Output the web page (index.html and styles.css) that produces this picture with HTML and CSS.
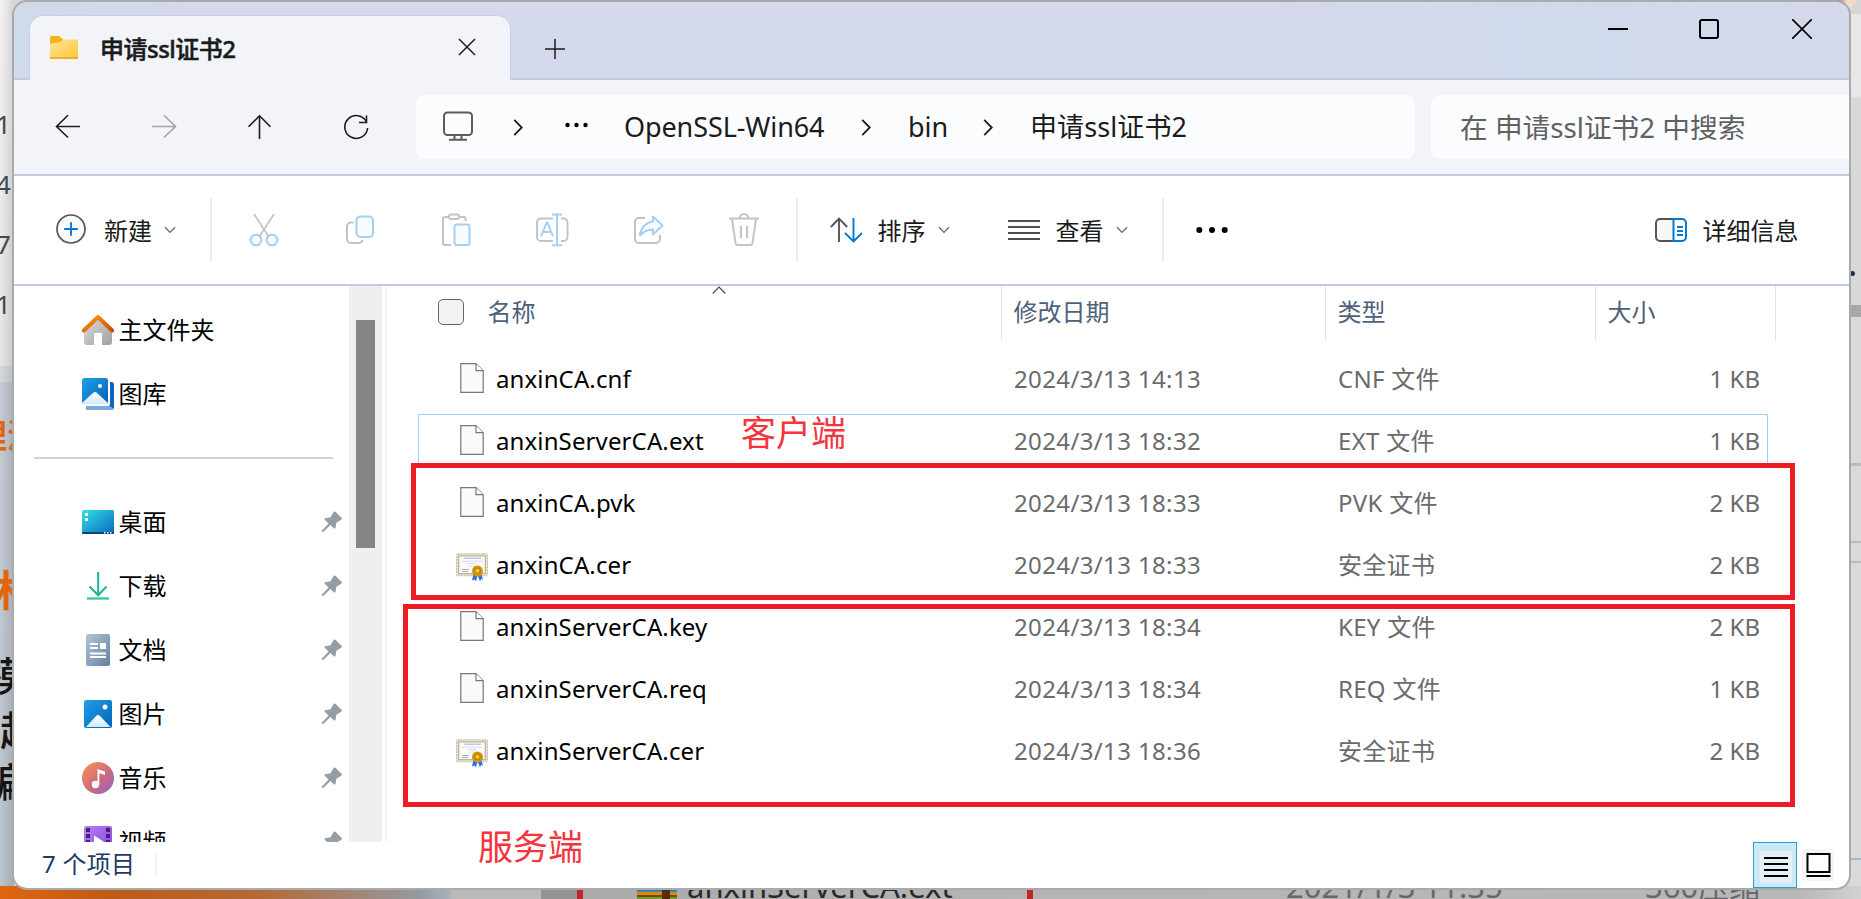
FILE: index.html
```html
<!DOCTYPE html>
<html lang="zh-CN">
<head>
<meta charset="utf-8">
<title>申请ssl证书2</title>
<link rel="stylesheet" href="styles.css">
</head>
<body>
<svg class="defs" width="0" height="0">
  <defs>
    <linearGradient id="gFolder" x1="0" y1="0" x2="1" y2="1"><stop offset="0" stop-color="#ffe59a"/><stop offset="1" stop-color="#fdc636"/></linearGradient>
    <linearGradient id="gRoof" x1="0" y1="0" x2="1" y2="1"><stop offset="0" stop-color="#fb9a0c"/><stop offset="1" stop-color="#d04a05"/></linearGradient>
    <linearGradient id="gWall" x1="0" y1="0" x2="1" y2="1"><stop offset="0" stop-color="#dedede"/><stop offset="1" stop-color="#9f9f9f"/></linearGradient>
    <linearGradient id="gBlue" x1="0" y1="0" x2="1" y2="1"><stop offset="0" stop-color="#1ea2ea"/><stop offset="1" stop-color="#0560b4"/></linearGradient>
    <linearGradient id="gSnow" x1="0" y1="0" x2="0" y2="1"><stop offset="0" stop-color="#fff"/><stop offset="1" stop-color="#d2eaff"/></linearGradient>
    <linearGradient id="gDesk" x1="0" y1="0" x2="1" y2="1"><stop offset="0" stop-color="#38e0e6"/><stop offset="1" stop-color="#0868bd"/></linearGradient>
    <linearGradient id="gDoc" x1="0" y1="0" x2="1" y2="1"><stop offset="0" stop-color="#b3c6da"/><stop offset="1" stop-color="#64809f"/></linearGradient>
    <linearGradient id="gMusic" x1="0" y1="0" x2="1" y2="1"><stop offset=".1" stop-color="#f48c58"/><stop offset=".55" stop-color="#cf6a7c"/><stop offset="1" stop-color="#8a62d0"/></linearGradient>
    <linearGradient id="gVideo" x1="0" y1="0" x2="1" y2="1"><stop offset="0" stop-color="#b780f5"/><stop offset="1" stop-color="#8a3fe0"/></linearGradient>
    <symbol id="pin" viewBox="0 0 22 22"><path d="M12.500 1.200c.6-.9 1.500-.9 2.200-.2l5.600 5.600c.8.8.7 1.800-.2 2.300l-4.600 2.700-1 5.200c-.2 1-.9 1.200-1.600.5l-3.600-3.400-6.500 6.500c-.7.7-2.500.9-1.800-.9L7.500 12.500 4 9c-.9-.8-.6-1.600.4-1.800l5.100-1z" fill="#949ea6"/></symbol>
    <symbol id="file" viewBox="0 0 24 30"><path d="M.8.7h15.200l7.200 7v21.600H.8z" fill="#fafafa" stroke="#777" stroke-width="1.200"/><path d="M16 .7V7.600h7.200" fill="#fff" stroke="#777" stroke-width="1.200"/></symbol>
    <symbol id="cert" viewBox="0 0 32 29"><rect x=".5" y=".8" width="31" height="22" rx="1" fill="#e9e2cf" stroke="#c5bba2" stroke-dasharray="2 1"/><rect x="2.700" y="2.900" width="26.600" height="17.800" fill="#fbfbfb" stroke="#b2a68a"/><path d="M8 5.200h17" stroke="#b4b8e0" stroke-width="1.200"/><path d="M5 8.200h22M11 10.500h9M12 13h8" stroke="#d9dbee"/><path d="M6 16.500h7M6 18.500h6" stroke="#a9acc0"/><path d="M17.500 20.500l-1.500 7 2.500-1 1.500 2 1.500-6.500 2.500 6.500 1-2.500 2 .5-2-6z" fill="#2c6cec"/><circle cx="21.500" cy="18" r="5.500" fill="#d29608"/><circle cx="21.500" cy="17.800" r="2.700" fill="#f7c82a" stroke="#a57105"/></symbol>
    <symbol id="chev" viewBox="0 0 12 8"><path d="M1 1.200l5 5.200 5-5.200" fill="none" stroke="#666" stroke-width="1.300"/></symbol>
    <symbol id="right" viewBox="0 0 10 18"><path d="M1 1l8 8-8 8" fill="none" stroke="#1b1b1b" stroke-width="1.900"/></symbol>
  </defs>
</svg>

<div class="desktop">
  <div class="strip-left">
    <span class="frag t1">1次</span><span class="frag t2">4次</span><span class="frag t3">7次</span><span class="frag t4">1次</span>
    <span class="frag org o1">理流</span><span class="frag org o2">林</span>
    <span class="frag blk b1">模</span><span class="frag blk b2">起</span><span class="frag blk b3">编</span>
  </div>
  <div class="strip-top"></div>
  <div class="avatar"></div>
  <div class="strip-right"></div>
  <div class="strip-bottom">
    <i class="redbar r1"></i><i class="redbar r2"></i><i class="zip"></i>
    <span class="under u1">anxinServerCA.ext</span><span class="under u2">2021/1/3 11:35</span><span class="under u3">360压缩</span>
  </div>

  <div class="window">
    <header class="titlebar">
      <div class="tab">
        <svg class="folder" width="28" height="23" viewBox="0 0 28 23"><path d="M0 1.500Q0 0 1.500 0H9l4 3.500V8H0z" fill="#f8b216"/><path d="M0 7.500L10.500 6l2.500-2.500h15V23H0z" fill="url(#gFolder)"/><path d="M0 22h28" stroke="#eda720" stroke-width="1.500"/></svg>
        <span class="tab-title">申请ssl证书2</span>
        <svg class="tab-close" width="18" height="18" viewBox="0 0 18 18"><path d="M1 1l16 16M17 1L1 17" stroke="#1c1c1c" stroke-width="1.500"/></svg>
      </div>
      <svg class="plus" width="20" height="20" viewBox="0 0 20 20"><path d="M0 10h20M10 0v20" stroke="#1c1c1c" stroke-width="1.500"/></svg>
      <div class="controls">
        <svg width="20" height="20" viewBox="0 0 20 20"><path d="M0 10h20" stroke="#000" stroke-width="2"/></svg>
        <svg width="20" height="20" viewBox="0 0 20 20"><rect x="1" y="1" width="18" height="18" rx="2" fill="none" stroke="#000" stroke-width="2"/></svg>
        <svg width="20" height="20" viewBox="0 0 20 20"><path d="M0 0l20 20M20 0L0 20" stroke="#000" stroke-width="1.700"/></svg>
      </div>
    </header>

    <nav class="navbar">
      <div class="nav-buttons">
        <svg width="26" height="26" viewBox="0 0 26 26" fill="none" stroke="#1c1c1c" stroke-width="1.600"><path d="M25 12.500H1.500M13 1.300L1.500 12.500 13 23.500"/></svg>
        <svg width="26" height="26" viewBox="0 0 26 26" fill="none" stroke="#a3a5aa" stroke-width="1.600"><path d="M1 12.500h23.500M13 1.300L24.500 12.500 13 23.500"/></svg>
        <svg width="26" height="26" viewBox="0 0 26 26" fill="none" stroke="#1c1c1c" stroke-width="1.600"><path d="M12.500 25V2M1.500 12.800L12.500 1.800l11 11"/></svg>
        <svg width="26" height="26" viewBox="0 0 26 26" fill="none" stroke="#1c1c1c" stroke-width="1.600"><path d="M23.500 8A11.400 11.400 0 1 0 24.600 14M23.500 1.500V8.500H16"/></svg>
      </div>
      <div class="address">
        <svg class="monitor" width="30" height="30" viewBox="0 0 30 30" fill="none" stroke="#5c5c5c" stroke-width="2"><rect x="1" y="1.500" width="28" height="22.500" rx="3.500"/><path d="M11.500 24v4M18.500 24v4M6 28.800h18"/></svg>
        <svg class="sep s1" width="10" height="17"><use href="#right"/></svg>
        <svg class="dots" width="23" height="6" viewBox="0 0 23 6"><circle cx="2.500" cy="3" r="2.200"/><circle cx="11.500" cy="3" r="2.200"/><circle cx="20.500" cy="3" r="2.200"/></svg>
        <span class="crumb c1">OpenSSL-Win64</span>
        <svg class="sep s2" width="10" height="17"><use href="#right"/></svg>
        <span class="crumb c2">bin</span>
        <svg class="sep s3" width="10" height="17"><use href="#right"/></svg>
        <span class="crumb c3">申请ssl证书2</span>
      </div>
      <div class="search">在 申请ssl证书2 中搜索</div>
    </nav>

    <div class="toolbar">
      <div class="new">
        <svg width="30" height="30" viewBox="0 0 30 30"><circle cx="15" cy="15" r="14" fill="#fafafa" stroke="#555" stroke-width="1.700"/><path d="M8.200 15h13.600M15 8.200v13.600" stroke="#0078d4" stroke-width="1.900"/></svg>
        <span>新建</span>
        <svg class="chev" width="12" height="8"><use href="#chev"/></svg>
      </div>
      <div class="actions">
        <svg width="32" height="34" viewBox="0 0 32 34" fill="none" stroke-width="1.700"><path d="M6 1l14.500 22.500M26 1L11.500 23.500" stroke="#c3c3c3"/><circle cx="8" cy="27" r="5.300" stroke="#a3cff0" stroke-width="2"/><circle cx="24" cy="27" r="5.300" stroke="#a3cff0" stroke-width="2"/></svg>
        <svg width="32" height="34" viewBox="0 0 32 34" fill="none" stroke-width="2"><path d="M9.500 9.500H7a4 4 0 0 0-4 4V26a4 4 0 0 0 4 4h7.500a4 4 0 0 0 4-3" stroke="#c3c3c3"/><rect x="12.500" y="3.500" width="16.500" height="20.500" rx="4" fill="#f8fbfe" stroke="#a3cff0"/></svg>
        <svg width="32" height="34" viewBox="0 0 32 34" fill="none" stroke-width="2"><path d="M11 32H5a2 2 0 0 1-2-2V6a2 2 0 0 1 2-2H8M19 4h4.500a2 2 0 0 1 2 2v2" stroke="#c3c3c3"/><rect x="9" y="1.500" width="10" height="4.500" rx="2.200" stroke="#c3c3c3"/><rect x="14.500" y="11.500" width="15" height="20.500" rx="2" fill="#f8fbfe" stroke="#a3cff0"/></svg>
        <svg width="34" height="34" viewBox="0 0 34 34" fill="none" stroke-width="1.900"><path d="M18 5.500H6a4 4 0 0 0-4 4V24a4 4 0 0 0 4 4h12M26 5.500h2.500a4 4 0 0 1 4 4V24a4 4 0 0 1-4 4H26" stroke="#c3c3c3"/><path d="M6 23.500L11.700 9.500h.8l5.500 14M8 19h8M22 2v30M17 1.500h10M17 32.300h10" stroke="#a3cff0"/></svg>
        <svg width="32" height="34" viewBox="0 0 32 34" fill="none" stroke-width="2"><path d="M13 5H7a4 4 0 0 0-4 4v17a4 4 0 0 0 4 4h17a4 4 0 0 0 4-4v-4" stroke="#c3c3c3"/><path d="M21 3.500L30.500 12.500l-9.500 9v-5C15 16.500 11 19 8 22.500 8.500 15.500 13.500 9.500 21 8.500z" fill="#f8fbfe" stroke="#a3cff0" stroke-linejoin="round"/></svg>
        <svg width="32" height="34" viewBox="0 0 32 34" fill="none" stroke="#c3c3c3" stroke-width="2"><path d="M1 5.500h30M11.500 5.500a4.500 4.500 0 0 1 9 0M4 6l3.500 24a2.500 2.500 0 0 0 2.500 2h12a2.500 2.500 0 0 0 2.500-2L28 6M13 13v12M19 13v12"/></svg>
      </div>
      <div class="menus">
        <svg width="32" height="26" viewBox="0 0 32 26" fill="none" stroke-width="1.900"><path d="M9 25V1.500M.8 10L9 1.500l8.200 8.500" stroke="#555"/><path d="M23.500 1v23.500M15 16l8.500 8.500L32 16" stroke="#0078d4"/></svg>
        <span>排序</span>
        <svg class="chev" width="12" height="8"><use href="#chev"/></svg>
        <svg class="lines" width="32" height="22" viewBox="0 0 32 22" stroke="#4e4e4e" stroke-width="1.900"><path d="M0 2h32M0 8h32M0 14h32M0 20h32"/></svg>
        <span>查看</span>
        <svg class="chev" width="12" height="8"><use href="#chev"/></svg>
      </div>
      <svg class="more" width="32" height="8" viewBox="0 0 32 8"><circle cx="3.300" cy="4" r="3"/><circle cx="16" cy="4" r="3"/><circle cx="28.700" cy="4" r="3"/></svg>
      <div class="details">
        <svg width="32" height="24" viewBox="0 0 32 24" fill="none" stroke-width="2"><path d="M18 1H5a4 4 0 0 0-4 4v14a4 4 0 0 0 4 4h13" fill="#f7f7f7" stroke="#555"/><path d="M18.500 1H27a4 4 0 0 1 4 4v14a4 4 0 0 1-4 4h-8.500zM22 9h6M22 13h6M22 17h6" stroke="#0078d4"/></svg>
        <span>详细信息</span>
      </div>
    </div>

    <main class="body">
      <aside class="sidebar">
        <div class="tree">
          <div class="item"><svg class="ico" viewBox="0 0 32 32"><path d="M2 14L16 3l14 11v14a3 3 0 0 1-3 3h-7V19h-8v12H5a3 3 0 0 1-3-3z" fill="url(#gWall)"/><path d="M1.800 16.500L16 3l14.200 13.500" fill="none" stroke="url(#gRoof)" stroke-width="4" stroke-linejoin="round" stroke-linecap="round"/></svg><span>主文件夹</span></div>
          <div class="item"><svg class="ico" viewBox="0 0 32 32"><path d="M28 4h1.500A2.500 2.500 0 0 1 32 6.500V29a3 3 0 0 1-3 3H6.500A2.500 2.500 0 0 1 4 29.500V28h22a2 2 0 0 0 2-2z" fill="#0b65bd"/><path d="M4 28h24l4 3-3 1H6.500A2.500 2.500 0 0 1 4 29.500z" fill="#79a9dc"/><rect width="26" height="26" rx="2.500" fill="url(#gBlue)"/><circle cx="18" cy="8" r="2" fill="#fff"/><path d="M0 25l11.500-10.500q1.500-1.200 3 0L26 25l-1 1H1z" fill="url(#gSnow)"/></svg><span>图库</span></div>
          <div class="rule"></div>
          <div class="item"><svg class="ico" viewBox="0 0 32 32"><rect y="4" width="32" height="24" rx="1.500" fill="url(#gDesk)"/><path d="M0 26h32v.5A1.500 1.500 0 0 1 30.500 28h-29A1.500 1.500 0 0 1 0 26.500z" fill="#0b4874"/><path d="M3 7h3v3H3zM3 12h3v3H3zM22 26h1.500v1.500H22zM25 26h1.500v1.500H25zM28 26h1.500v1.500H28z" fill="#fff"/></svg><span>桌面</span><svg class="pin"><use href="#pin"/></svg></div>
          <div class="item"><svg class="ico" viewBox="0 0 32 32"><path d="M16.200 2v23M7.500 16.500l8.700 8.800 8.300-8.800" fill="none" stroke="#18b59a" stroke-width="2"/><path d="M5 28.500h22" stroke="#2cc58e" stroke-width="2.200"/></svg><span>下载</span><svg class="pin"><use href="#pin"/></svg></div>
          <div class="item"><svg class="ico" viewBox="0 0 32 32"><rect x="4" width="24" height="32" rx="2" fill="url(#gDoc)"/><path d="M8 10h8M8 14h8M8 19.500h16M8 23h16" stroke="#fff" stroke-width="1.800"/><path d="M18 9h6v6h-6z" fill="#fff"/></svg><span>文档</span><svg class="pin"><use href="#pin"/></svg></div>
          <div class="item"><svg class="ico" viewBox="0 0 32 32"><rect x="2" y="2" width="28" height="28" rx="2" fill="url(#gBlue)"/><circle cx="23" cy="9" r="2.500" fill="#fff"/><path d="M4 29l10.500-11.500q1.500-1.200 3 0L28.500 29z" fill="url(#gSnow)"/></svg><span>图片</span><svg class="pin"><use href="#pin"/></svg></div>
          <div class="item"><svg class="ico" viewBox="0 0 32 32"><circle cx="16" cy="16" r="16" fill="url(#gMusic)"/><circle cx="13.500" cy="22.500" r="3.700" fill="#fff"/><path d="M15.500 22V7l7.500 2.500V13l-5.700-1.700V22.500z" fill="#fff"/></svg><span>音乐</span><svg class="pin"><use href="#pin"/></svg></div>
          <div class="item"><svg class="ico" viewBox="0 0 32 32"><rect x="2" width="28" height="30" rx="2" fill="url(#gVideo)"/><path d="M4 2h4v4H4zM4 8h4v4H4zM4 14h4v4H4zM24 2h4v4h-4zM24 8h4v4h-4zM24 14h4v4h-4z" fill="#46236e"/><path d="M12 9.500l9.500 6-9.500 6z" fill="#fff"/></svg><span>视频</span><svg class="pin"><use href="#pin"/></svg></div>
        </div>
        <div class="scroll"><div class="thumb"></div></div>
      </aside>

      <section class="list">
        <div class="head">
          <div class="h-name"><i class="check"></i><span>名称</span><svg class="asc" width="14" height="8" viewBox="0 0 14 8"><path d="M.7 7.500L7 1l6.300 6.500" fill="none" stroke="#444" stroke-width="1.100"/></svg></div>
          <div class="h-date">修改日期</div><div class="h-type">类型</div><div class="h-size">大小</div>
        </div>
        <div class="rows">
          <div class="row"><svg class="file"><use href="#file"/></svg><span class="name">anxinCA.cnf</span><span class="date">2024/3/13 14:13</span><span class="type">CNF 文件</span><span class="size">1 KB</span></div>
          <div class="row focus"><svg class="file"><use href="#file"/></svg><span class="name">anxinServerCA.ext</span><span class="date">2024/3/13 18:32</span><span class="type">EXT 文件</span><span class="size">1 KB</span></div>
          <div class="row"><svg class="file"><use href="#file"/></svg><span class="name">anxinCA.pvk</span><span class="date">2024/3/13 18:33</span><span class="type">PVK 文件</span><span class="size">2 KB</span></div>
          <div class="row"><svg class="cert"><use href="#cert"/></svg><span class="name">anxinCA.cer</span><span class="date">2024/3/13 18:33</span><span class="type">安全证书</span><span class="size">2 KB</span></div>
          <div class="row"><svg class="file"><use href="#file"/></svg><span class="name">anxinServerCA.key</span><span class="date">2024/3/13 18:34</span><span class="type">KEY 文件</span><span class="size">2 KB</span></div>
          <div class="row"><svg class="file"><use href="#file"/></svg><span class="name">anxinServerCA.req</span><span class="date">2024/3/13 18:34</span><span class="type">REQ 文件</span><span class="size">1 KB</span></div>
          <div class="row"><svg class="cert"><use href="#cert"/></svg><span class="name">anxinServerCA.cer</span><span class="date">2024/3/13 18:36</span><span class="type">安全证书</span><span class="size">2 KB</span></div>
        </div>
      </section>
    </main>

    <footer class="status">
      <span class="count">7 个项目</span>
      <div class="views">
        <div class="view on"><svg width="32" height="32" viewBox="0 0 32 32"><rect width="32" height="32" rx="3" fill="#e6eef6"/><path d="M4 7h24M4 13h24M4 19h24M4 25h24" stroke="#000" stroke-width="2"/></svg></div>
        <div class="view"><svg width="32" height="32" viewBox="0 0 32 32"><rect width="32" height="32" rx="3" fill="#f5f5f5"/><path d="M5.500 5h22v18h-22z" fill="#fff" stroke="#000" stroke-width="2"/><path d="M4.500 27h24" stroke="#000" stroke-width="2"/></svg></div>
      </div>
    </footer>
  </div>

  <div class="mark m1"></div>
  <div class="mark m2"></div>
  <span class="note n1">客户端</span>
  <span class="note n2">服务端</span>
</div>
</body>
</html>
```

FILE: styles.css
```css
* { box-sizing: border-box; }
html, body { margin: 0; height: 100%; overflow: hidden; }
body { font-family: "Noto Sans", "Noto Sans CJK SC", sans-serif; font-size: 24px; line-height: 32px; color: #1b1b1b; }
svg { display: block; flex: none; }
.defs { position: absolute; }
.desktop { position: relative; width: 1861px; height: 899px; overflow: hidden; background: #d6d6d6; white-space: nowrap; }

/* content behind the window */
.strip-left { position: absolute; left: 0; top: 0; width: 14px; height: 899px; overflow: hidden; background: linear-gradient(90deg, transparent, rgba(0,0,0,.13)), linear-gradient(#f4f4f4 0, #e6e6e6 366px, #d6d9db 366px, #d6d9db 382px, #c4ccd4 382px, #bcc5ce 899px); }
.frag { position: absolute; left: -4px; color: #45484d; font-size: 26px; }
.t1 { top: 108px; } .t2 { top: 168px; } .t3 { top: 228px; } .t4 { top: 288px; }
.org { font-size: 33px; color: #e0650e; font-weight: 600; }
.o1 { top: 420px; left: -26px; } .o2 { top: 574px; left: -5px; font-size: 42px; font-weight: 700; }
.blk { font-size: 40px; color: #151515; font-weight: 500; }
.b1 { top: 660px; left: -14px; } .b2 { top: 714px; left: 0; } .b3 { top: 766px; left: -16px; }
.strip-top { position: absolute; left: 24px; top: 0; width: 1810px; height: 14px; background: linear-gradient(90deg, #b5b3b2 1522px, #c05b45 1522px, #c05b45 1692px, #b9b7b5 1692px); }
.avatar { position: absolute; left: 1790px; top: -40px; width: 70px; height: 56px; border-radius: 50%; background: radial-gradient(circle at 50% 70%, #a8604f 12px, #eedcc8 22px); }
.strip-right { position: absolute; left: 1849px; top: 14px; width: 12px; height: 885px; background: linear-gradient(transparent 449px, #bbb 449px, #bbb 452px, transparent 452px, transparent 527px, #b9b9b9 527px, #b9b9b9 529px, transparent 529px, transparent 547px, #b9b9b9 547px, #b9b9b9 549px, transparent 549px, transparent 844px, #9fb9d2 844px, #9fb9d2 846px, transparent 846px), linear-gradient(#e9e7e5 0, #e8e8e8 82px, #d8d8d8 84px, #d8d8d8 291px, #a8a8a8 291px, #a8a8a8 303px, #dadada 303px); }
.strip-right::after { content: ""; position: absolute; left: 1px; top: 257px; width: 5px; height: 5px; border-radius: 50%; background: #23303f; }
.strip-bottom { position: absolute; left: 0; top: 886px; width: 1861px; height: 13px; overflow: hidden; background: linear-gradient(90deg, #de650f 0, #bd5b18 110px, #b36a35 260px, #a38473 350px, #959aa1 420px, #a9b4be 451px, #b9b9b9 451px, #bababa 541px, #949494 541px, #949494 577px, #aaa 583px, #b4b4b4 1000px, #b8b8b8 1800px, #d2d2d2 1861px); }
.redbar { position: absolute; top: 0; width: 6px; height: 13px; background: #bf2529; }
.r1 { left: 577px; } .r2 { left: 1027px; }
.zip { position: absolute; left: 637px; top: 0; width: 40px; height: 13px; background: linear-gradient(90deg, transparent 25px, #55300c 25px, #55300c 33px, transparent 33px), linear-gradient(#3684ad 6px, #d78b12 6px, #d78b12 9px, #8f3c18 9px, #8f3c18 11px, #699e2c 11px); }
.under { position: absolute; font-size: 31px; line-height: 40px; color: #29292a; top: -20px; }
.u1 { left: 687px; } .u2 { left: 1286px; color: #68686a; } .u3 { left: 1645px; color: #68686a; }

/* window */
.window { position: absolute; left: 14px; top: 2px; width: 1835px; height: 886px; display: flex; flex-direction: column; overflow: hidden; border-radius: 13px; background: #fff; outline: 2px solid #a9aaab; }
.titlebar { height: 78px; flex: none; display: flex; align-items: flex-start; background: linear-gradient(90deg, #cfdaea 0, #d4d9eb 180px, #d4d9eb 1250px, #d0daeb 1550px, #d4d9eb); border-bottom: 2px solid #c4cbe0; }
.tab { width: 480px; height: 64px; margin: 14px 0 0 16px; padding: 20px 34px 0 20px; display: flex; border-radius: 13px 13px 0 0; background: #f2f4f9; box-shadow: 0 0 0 1px #cad0e4; clip-path: inset(-2px -2px 0 -2px); }
.tab-title { margin: -3px 0 0 22px; font-size: 24px; line-height: 32px; font-weight: 500; -webkit-text-stroke: .5px #1b1b1b; letter-spacing: -.5px; }
.tab-close { margin: 2px 0 0 auto; }
.plus { margin: 37px 0 0 35px; }
.controls { display: flex; gap: 73px; margin: 17px 37px 0 auto; }
.controls svg:nth-child(2) { margin-left: -2px; }
.navbar { height: 96px; flex: none; display: flex; align-items: flex-start; padding: 15px 0 0 6px; background: #f2f4f9; border-bottom: 2px solid #c3c9de; }
.nav-buttons { width: 396px; height: 64px; display: flex; align-items: center; }
.nav-buttons svg { margin: 0 35px; }
.address, .search { height: 64px; display: flex; align-items: center; background: #fbfcfe; border-radius: 9px; font-size: 27px; }
.address { width: 999px; padding-left: 27px; }
.monitor { margin-top: -2px; }
.search { flex: 1; margin-left: 16px; padding-left: 29px; color: #616161; border-radius: 9px 0 0 9px; font-size: 27.700px; }
.s1 { margin-left: 40px; } .dots { margin: -4px 0 0 42px; } .c1 { width: 201px; margin-left: 36px; letter-spacing: -.1px; }
.s2 { margin-left: 36px; } .c2 { margin-left: 37px; width: 42px; } .s3 { margin-left: 33px; } .c3 { margin-left: 37px; letter-spacing: .1px; }
.toolbar { height: 110px; flex: none; display: flex; align-items: center; border-bottom: 2px solid #c3c9de; }
.toolbar span { position: relative; top: 1px; }
.new { width: 198px; height: 64px; display: flex; align-items: center; padding-left: 42px; border-right: 2px solid #ededed; }
.new span { margin: 0 12px 0 18px; } .new svg:first-child { margin-top: -2px; }
.actions { width: 586px; height: 64px; display: flex; padding-left: 4px; border-right: 2px solid #ededed; }
.actions svg { margin: 15px 32px 0; } .actions svg:nth-child(4) { margin: 15px 31px 0; }
.menus { width: 366px; height: 64px; display: flex; align-items: center; padding-left: 32px; border-right: 2px solid #ededed; }
.menus span { margin: 0 12.500px 0 15.500px; } .lines { margin-left: 58px; }
.more { margin-left: 32px; }
.details { display: flex; align-items: center; gap: 15.500px; margin: 0 50.500px 0 auto; }
.body { height: 556px; flex: none; display: flex; overflow: hidden; }
.sidebar { width: 373px; display: flex; border-right: 2px solid #f5f5f5; }
.tree { width: 335px; padding: 12px 6px 0 68px; color: #000; }
.item { height: 64px; display: flex; align-items: center; gap: 5px; }
.item span { margin: -1px 0 0 -.5px; }
.ico { width: 32px; height: 32px; }
.pin { width: 22px; height: 22px; margin-left: auto; }
.rule { height: 64px; margin: 0 10px 0 -48px; background: linear-gradient(#d3d3d3, #d3d3d3) 0 31px / 100% 2px no-repeat; }
.scroll { width: 33px; height: 556px; padding: 34px 7px 0; background: #efefef; }
.thumb { height: 228px; background: #848484; }
.list { flex: 1; padding-left: 31px; }
.head { display: flex; height: 54px; color: #4d607c; line-height: 52px; }
.head > div { border-right: 1px solid #e2e2e2; }
.h-name { position: relative; width: 584px; display: flex; align-items: center; padding: 0 0 2px 20px; }
.check { width: 26px; height: 26px; margin-right: 23.500px; border: 1.600px solid #666; border-radius: 5px; background: #f3f3f3; }
.asc { position: absolute; left: 294px; top: 0; }
.h-date { width: 324px; padding-left: 11.500px; } .h-type { width: 270px; padding-left: 11.500px; } .h-size { width: 180px; padding-left: 11.500px; }
.rows { padding-top: 12px; width: 1350px; }
.row { height: 62px; display: flex; align-items: center; padding: 0 7px 8px 40px; color: #6b6b6b; border: 1px solid transparent; }
.focus { border-top-color: #99d1f5; background: linear-gradient(#99d1f5, #99d1f5) 0 0 / 1px 52px no-repeat border-box, linear-gradient(#99d1f5, #99d1f5) 100% 0 / 1px 52px no-repeat border-box; }
.file { width: 24px; height: 30px; margin: -2px 12px 0 1px; }
.cert { width: 32px; height: 29px; margin: 4px 8px 0 -3px; }
.name { width: 518px; color: #000; letter-spacing: .12px; } .date { width: 324px; letter-spacing: .37px; } .type { width: 220px; letter-spacing: .3px; } .size { margin-left: auto; }
.status { height: 46px; flex: none; display: flex; align-items: center; color: #1e3a63; padding-right: 11px; }
.count { height: 22px; line-height: 20px; width: 143px; padding-left: 28px; border-right: 2px solid #f2f2f2; letter-spacing: .25px; }
.views { display: flex; margin-left: auto; gap: 1px; }
.view { width: 40px; height: 46px; display: flex; align-items: center; justify-content: center; }
.view.on { width: 44px; padding: 3px 0 0 2px; background: #cbe8f7; border: 1px solid #26a0da; }

/* annotations */
.mark { position: absolute; border: 5px solid #ed1c24; }
.m1 { left: 411px; top: 463px; width: 1384px; height: 137px; }
.m2 { left: 403px; top: 604px; width: 1392px; height: 203px; }
.note { position: absolute; font-size: 35px; line-height: 48px; color: #f5353d; }
.n1 { left: 741px; top: 409px; } .n2 { left: 478px; top: 823px; }
```
